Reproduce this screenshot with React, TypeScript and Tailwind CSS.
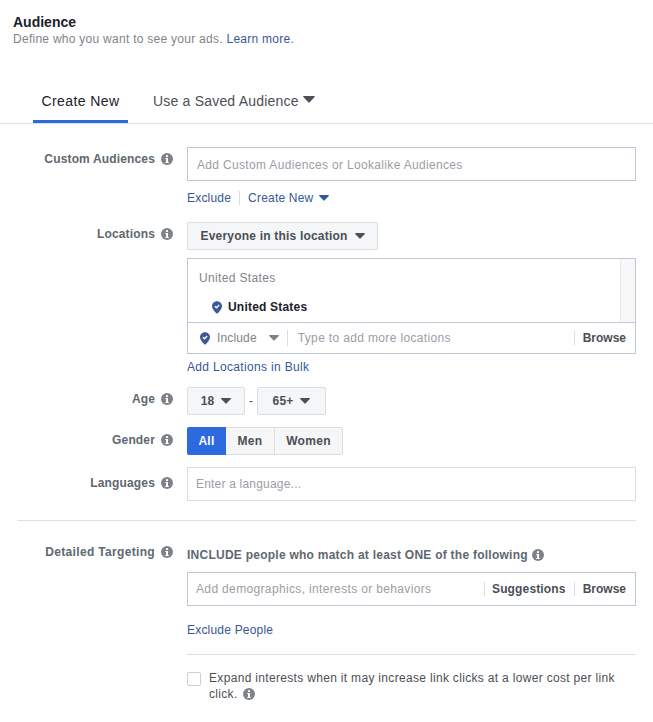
import { ReactNode } from 'react';

const linkColor = 'text-[#365899]';

function Info({ className = '' }: { className?: string }) {
  return (
    <svg viewBox="0 0 12 12" className={`inline-block h-3 w-3 shrink-0 ${className}`}>
      <circle cx="6" cy="6" r="6" fill="#7f8389" />
      <rect x="5" y="2.2" width="2" height="1.8" fill="#fff" />
      <path d="M4.3 5h2.7v3.9h.8V10H4.3V8.9h.8V6.1h-.8z" fill="#fff" />
    </svg>
  );
}

function Caret({ className = '' }: { className?: string }) {
  return (
    <svg viewBox="0 0 10 6" className={`inline-block h-[6px] w-[10px] shrink-0 ${className}`}>
      <path d="M0.6 0h8.8c.5 0 .7.5.4.9L5.4 5.6c-.2.3-.6.3-.8 0L.2.9C-.1.5.1 0 .6 0z" fill="currentColor" />
    </svg>
  );
}

function Pin() {
  return (
    <svg viewBox="0 0 11 14" className="h-[13px] w-[10px] shrink-0">
      <path d="M5.5 0C2.4 0 0 2.4 0 5.4c0 3.5 3.7 7 5.5 8.6C7.3 12.4 11 8.9 11 5.4 11 2.4 8.6 0 5.5 0z" fill="#3b5998" />
      <path d="M3.2 5.6l1.7 1.7 3-3" fill="none" stroke="#fff" strokeWidth="1.4" />
    </svg>
  );
}

function Row({ label, children, className = '' }: { label: string; children: ReactNode; className?: string }) {
  return (
    <div className={`flex ${className}`}>
      <div className="flex w-[173px] shrink-0 items-center justify-end gap-[6px] self-start text-[12px] leading-[14px] font-bold tracking-[0.15px] text-[#606770]">
        <span>{label}</span>
        <Info />
      </div>
      <div className="ml-[14px] w-[449px]">{children}</div>
    </div>
  );
}

function SelectButton({ children, className = '' }: { children: ReactNode; className?: string }) {
  return (
    <div className={`flex h-[28px] items-center justify-center rounded-[2px] border border-[#dadde1] bg-[#f5f6f7] text-[12px] font-bold tracking-[0.2px] text-[#4b4f56] ${className}`}>
      {children}
    </div>
  );
}

export default function App() {
  return (
    <div className="h-[722px] w-[653px] overflow-hidden bg-white font-['Liberation_Sans',Arial,sans-serif] text-[12px]">
      {/* Titre */}
      <div className="pt-[15px] pl-[13px]">
        <div className="text-[14px] leading-[15px] font-bold text-[#1d2129]">Audience</div>
        <div className="mt-[2px] text-[12px] leading-[15px] tracking-[0.27px] text-[#7f8389]">
          Define who you want to see your ads. <span className={linkColor}>Learn more.</span>
        </div>
      </div>

      {/* Onglets */}
      <div className="mt-[24px] flex h-[53px] border-b border-[#dddfe2] pl-[33px] text-[14px] tracking-[0.2px]">
        <div className="flex h-[52px] w-[95px] items-center justify-center border-b-[3px] border-[#2d6ae0] pt-[11px] font-medium tracking-[0.4px] text-[#1d2129]">
          Create New
        </div>
        <div className="ml-[25px] flex h-[52px] items-center gap-[4px] pt-[9px] text-[#4b4f56]">
          Use a Saved Audience
          <Caret className="mb-[4px] h-[7px] w-[12px] text-[#4b4f56]" />
        </div>
      </div>

      {/* Custom Audiences */}
      <Row label="Custom Audiences" className="mt-[23px] [&>div:first-child]:mt-[5px]">
        <div className="flex h-[34px] items-center border border-[#bdc7d8] pt-[1px] pl-[9px] tracking-[0.33px] text-[#9a9ea5]">
          Add Custom Audiences or Lookalike Audiences
        </div>
        <div className={`mt-[9px] flex h-[15px] items-center text-[12px] tracking-[0.2px] ${linkColor}`}>
          <span>Exclude</span>
          <span className="mx-[8px] h-[14px] w-px bg-[#dadde1]" />
          <span>Create New</span>
          <Caret className="ml-[6px] h-[5px] w-[9px]" />
        </div>
      </Row>

      {/* Locations */}
      <Row label="Locations" className="mt-[17px] [&>div:first-child]:mt-[5px]">
        <SelectButton className="w-[191px] gap-[7px]">
          Everyone in this location
          <Caret className="h-[5px] w-[9px]" />
        </SelectButton>
        <div className="mt-[8px] h-[96px] border border-[#bdc7d8]">
          <div className="flex h-[64px] border-b border-[#bdc7d8]">
            <div className="flex-1 pl-[11px]">
              <div className="pt-[12px] leading-[15px] tracking-[0.35px] text-[#7f8389]">United States</div>
              <div className="mt-[14px] flex items-center gap-[6px] pl-[13px] leading-[15px] font-bold tracking-[0.2px] text-[#1d2129]">
                <Pin />
                United States
              </div>
            </div>
            <div className="w-[15px] border-l border-[#e9ebee] bg-[#f8f8f8]" />
          </div>
          <div className="flex h-[30px] items-center pr-[9px] pl-[12px]">
            <Pin />
            <span className="ml-[7px] tracking-[0.15px] text-[#7f8389]">Include</span>
            <Caret className="ml-[12px] h-[5px] w-[9px] text-[#7f8389]" />
            <span className="ml-[8px] h-[16px] w-px bg-[#dadde1]" />
            <span className="ml-[10px] flex-1 tracking-[0.35px] text-[#9a9ea5]">Type to add more locations</span>
            <span className="mr-[8px] h-[14px] w-px bg-[#dadde1]" />
            <span className="font-bold text-[#4b4f56]">Browse</span>
          </div>
        </div>
        <div className={`mt-[6px] leading-[15px] tracking-[0.33px] ${linkColor}`}>Add Locations in Bulk</div>
      </Row>

      {/* Age */}
      <Row label="Age" className="mt-[12px] [&>div:first-child]:mt-[5px]">
        <div className="flex items-center">
          <SelectButton className="w-[58px] gap-[7px]">
            18
            <Caret className="h-[5px] w-[9px]" />
          </SelectButton>
          <span className="w-[12px] text-center text-[#4b4f56]">-</span>
          <SelectButton className="w-[69px] gap-[7px]">
            65+
            <Caret className="h-[5px] w-[9px]" />
          </SelectButton>
        </div>
      </Row>

      {/* Gender */}
      <Row label="Gender" className="mt-[12px] [&>div:first-child]:mt-[6px]">
        <div className="flex h-[28px] w-[156px] text-[12px] font-bold tracking-[0.3px] text-[#4b4f56]">
          <div className="flex w-[39px] items-center justify-center rounded-l-[2px] bg-[#2d6ae0] text-white">All</div>
          <div className="flex w-[49px] items-center justify-center border-y border-r border-[#dadde1] bg-[#f5f6f7]">Men</div>
          <div className="flex flex-1 items-center justify-center rounded-r-[2px] border-y border-r border-[#dadde1] bg-[#f5f6f7]">Women</div>
        </div>
      </Row>

      {/* Languages */}
      <Row label="Languages" className="mt-[12px] [&>div:first-child]:mt-[9px]">
        <div className="flex h-[34px] items-center border border-[#dadde1] pl-[8px] tracking-[0.2px] text-[#9a9ea5]">
          Enter a language...
        </div>
      </Row>

      <div className="mt-[19px] ml-[17px] h-px w-[619px] bg-[#dddfe2]" />

      {/* Detailed Targeting */}
      <Row label="Detailed Targeting" className="mt-[24px] [&>div:first-child]:mt-0 [&>div:first-child]:tracking-[0.33px]">
        <div className="mt-[2px] flex h-[16px] items-center gap-[4px] font-bold tracking-[0.25px] text-[#606770]">
          INCLUDE people who match at least ONE of the following
          <Info />
        </div>
        <div className="mt-[9px] flex h-[34px] items-center border border-[#bdc7d8] pr-[9px] pl-[8px]">
          <span className="flex-1 tracking-[0.35px] text-[#9a9ea5]">Add demographics, interests or behaviors</span>
          <span className="mr-[7px] h-[14px] w-px bg-[#dadde1]" />
          <span className="font-bold tracking-[0.15px] text-[#4b4f56]">Suggestions</span>
          <span className="mx-[8px] h-[14px] w-px bg-[#dadde1]" />
          <span className="font-bold text-[#4b4f56]">Browse</span>
        </div>
        <div className={`mt-[17px] leading-[15px] tracking-[0.2px] ${linkColor}`}>Exclude People</div>
        <div className="mt-[16px] h-px bg-[#dddfe2]" />
        <div className="mt-[17px] flex">
          <div className="h-[14px] w-[14px] shrink-0 rounded-[2px] border border-[#ccd0d5] bg-white" />
          <div className="-mt-[2px] ml-[8px] w-[420px] leading-[16px] tracking-[0.32px] text-[#4b4f56]">
            Expand interests when it may increase link clicks at a lower cost per link click.{' '}
            <Info className="ml-[2px] align-[-2px]" />
          </div>
        </div>
      </Row>
    </div>
  );
}
